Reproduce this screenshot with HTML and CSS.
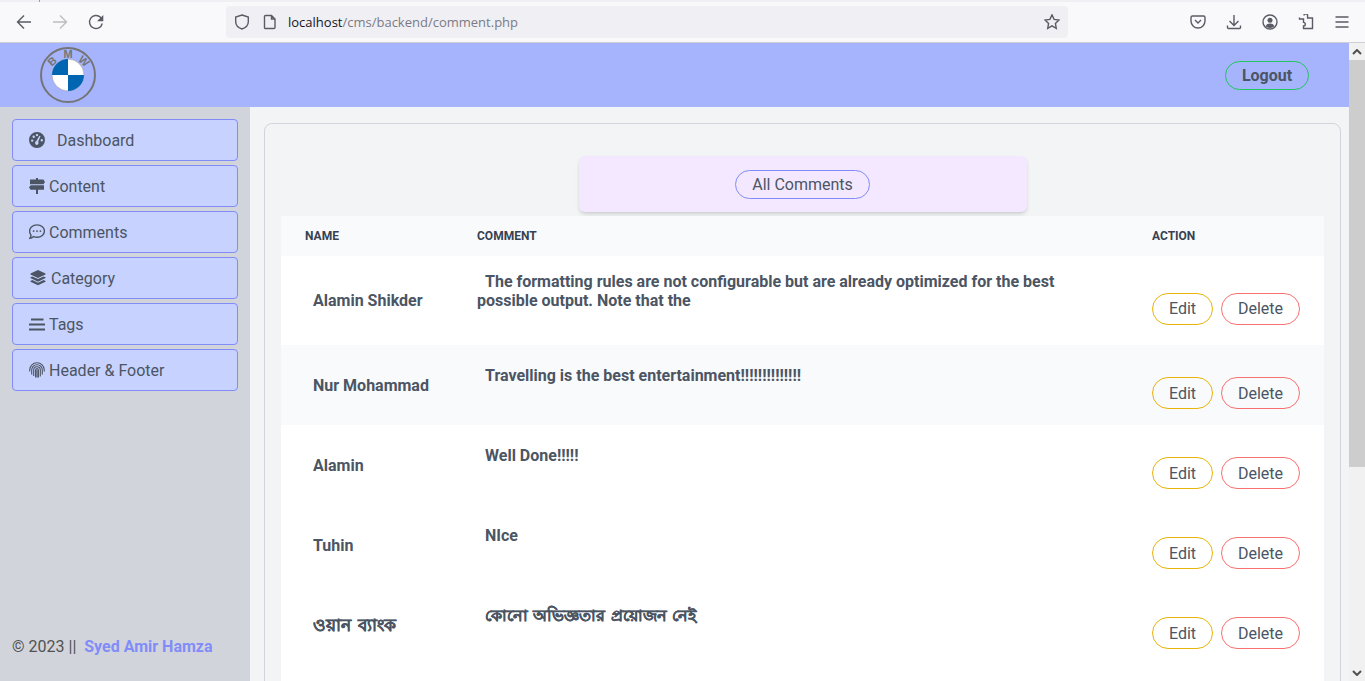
FILE: index.html
```html
<!DOCTYPE html>
<html lang="en">
<head>
<meta charset="utf-8">
<title>Comments</title>
<link rel="stylesheet" href="styles.css">
</head>
<body>
<div class="browser">
  <div class="tabstrip"><span class="tab-tick"></span></div>
  <div class="toolbar">
    <div class="nav-icons">
      <svg class="tb" viewBox="0 0 16 16"><path d="M15 8H1.500M8 1.500L1.500 8 8 14.500"/></svg>
      <svg class="tb faded" viewBox="0 0 16 16"><path d="M1 8h13.500M8 1.500L14.500 8 8 14.500"/></svg>
      <svg class="tb" viewBox="0 0 16 16"><path d="M14.300 9.500A6.500 6.500 0 1 1 12.500 3.300L14 5"/><path class="fill" d="M15.300 1v6.300H9z"/></svg>
    </div>
    <div class="urlbar">
      <svg class="ub shield" viewBox="0 0 16 16"><path d="M8 1l6.300 2v4.800c0 3.400-2.700 6-6.300 7.200-3.600-1.200-6.300-3.800-6.300-7.200V3z"/></svg>
      <svg class="ub doc" viewBox="0 0 16 16"><path d="M3.500 1.500h6l3.500 3.500v8.500a1 1 0 0 1-1 1H3.500a1 1 0 0 1-1-1v-11a1 1 0 0 1 1-1zM9.500 1.500V5H13"/></svg>
      <span class="url"><span class="host">localhost</span>/cms/backend/comment.php</span>
      <svg class="ub star" viewBox="0 0 16 16"><path d="M8 .9l2.100 4.500 4.900.6-3.600 3.400.9 4.900L8 11.900l-4.300 2.400.9-4.900L1 6l4.900-.6z"/></svg>
    </div>
    <div class="tool-icons">
      <svg class="tb" viewBox="0 0 16 16"><path d="M2.500 2h11A1.500 1.500 0 0 1 15 3.500V7a7 7 0 0 1-14 0V3.500A1.500 1.500 0 0 1 2.500 2zM5 6l3 3 3-3"/></svg>
      <svg class="tb" viewBox="0 0 16 16"><path d="M8 1v10M3.500 7L8 11.500 12.500 7M1.500 11.500v2a1 1 0 0 0 1 1h11a1 1 0 0 0 1-1v-2"/></svg>
      <svg class="tb" viewBox="0 0 16 16"><circle cx="8" cy="8" r="7"/><circle class="fill" cx="8" cy="6.200" r="2.500"/><path class="fill" d="M3.500 12.200c1-2 2.500-2.700 4.500-2.700s3.500.7 4.500 2.700A6 6 0 0 1 8 14a6 6 0 0 1-4.500-1.800z"/></svg>
      <svg class="tb" viewBox="0 0 16 16"><path d="M6 1.500a1.800 1.800 0 0 1 3.600 0V4h4.900v10.500h-9V12a1.800 1.800 0 1 0 0-3.600V5H1.500V3.500"/></svg>
      <svg class="tb" viewBox="0 0 16 16"><path d="M1.500 3h13M1.500 8h13M1.500 13h13"/></svg>
    </div>
  </div>
</div>
<div class="viewport">
  <div class="page">
    <header class="topbar">
      <svg class="logo" viewBox="0 0 56 56">
        <circle class="logo-ring" cx="28" cy="28" r="27"/>
        <text class="logo-text" x="12" y="18" transform="rotate(-42 12 14)">B</text>
        <text class="logo-text" x="28" y="10.500">M</text>
        <text class="logo-text" x="44" y="18" transform="rotate(42 44 14)">W</text>
        <circle class="logo-white" cx="28" cy="28" r="16"/>
        <path class="logo-blue" d="M28 28V12A16 16 0 0 0 12 28zM28 28V44A16 16 0 0 0 44 28z"/>
      </svg>
      <a class="pill logout">Logout</a>
    </header>
    <div class="body-row">
      <aside class="sidebar">
        <nav class="menu">
          <a class="menu-item first">
            <svg class="mi" viewBox="0 0 16 16"><path fill-rule="evenodd" d="M8 0a8 8 0 1 0 0 16A8 8 0 0 0 8 0zM3.200 9.800a1.200 1.200 0 1 1 0-2.400 1.200 1.200 0 0 1 0 2.400zM4.700 5.900a1.200 1.200 0 1 1 0-2.400 1.200 1.200 0 0 1 0 2.400zM8 4.300a1.200 1.200 0 1 1 0-2.400 1.200 1.200 0 0 1 0 2.400zM8 13a2 2 0 0 1-.6-3.900l3-5.300 1.100.5-2.400 5.500A2 2 0 0 1 8 13zM12.800 9.400a1.200 1.200 0 1 1 0-2.400 1.200 1.200 0 0 1 0 2.400z"/></svg>
            <span>Dashboard</span>
          </a>
          <a class="menu-item">
            <svg class="mi" viewBox="0 0 16 16"><path d="M7 0h2v1.600h5.400L16 4l-1.600 2.300H1V1.600h6zM1.600 7.300H15v4.400H9V16H7v-4.300H1.600L0 9.500z"/></svg>
            <span>Content</span>
          </a>
          <a class="menu-item">
            <svg class="mi" viewBox="1 1 14 14"><path class="line" d="M8 1.800c3.800 0 6.500 2.400 6.500 5.400S11.800 12.600 8 12.600c-1.100 0-2.100-.2-3-.6-.8.8-2 1.500-3.500 1.600.8-.8 1.200-1.700 1.300-2.700C2.100 9.900 1.500 8.600 1.500 7.200 1.500 4.200 4.200 1.800 8 1.800z"/><circle cx="5" cy="7.200" r=".8"/><circle cx="8" cy="7.200" r=".8"/><circle cx="11" cy="7.200" r=".8"/></svg>
            <span>Comments</span>
          </a>
          <a class="menu-item">
            <svg class="mi wide" viewBox="-1 0 18 16"><path d="M8 0l7.500 3.600v.8L8 8 .5 4.400v-.8zM2.300 6.400L8 9.100l5.700-2.700 1.800.9v.8L8 11.700.5 8.100v-.8zM2.300 10L8 12.700l5.700-2.700 1.800.9v.8L8 15.300.5 11.700v-.8z"/></svg>
            <span>Category</span>
          </a>
          <a class="menu-item">
            <svg class="mi" viewBox="0 0 16 16"><path d="M2 2.500h12.500v2H2zM0 7.500h16v2H0zM0 12.500h16v2H0z"/></svg>
            <span>Tags</span>
          </a>
          <a class="menu-item">
            <svg class="mi" viewBox="0 0 16 16"><path class="line thin" d="M.7 9.500V8a7.300 7.300 0 0 1 14.600 0v1.500M2.700 12.500V8a5.300 5.300 0 0 1 10.600 0v4.500M4.700 14V8a3.300 3.300 0 0 1 6.600 0v6.500M6.600 15.500V8a1.400 1.400 0 0 1 2.800 0v7.500M8 8v7.500"/></svg>
            <span>Header &amp; Footer</span>
          </a>
        </nav>
        <footer class="copyright">© 2023 || <b class="author">Syed Amir Hamza</b></footer>
      </aside>
      <main class="content">
        <section class="card">
          <div class="title-box"><span class="pill title-pill">All Comments</span></div>
          <div class="table-wrap">
            <table class="comments">
              <colgroup><col class="c-name"><col class="c-comment"><col class="c-action"></colgroup>
              <thead>
                <tr><th>Name</th><th>Comment</th><th>Action</th></tr>
              </thead>
              <tbody>
                <tr>
                  <td class="name">Alamin Shikder</td>
                  <td class="comment"><p>The formatting rules are not configurable but are already optimized for the best possible output. Note that the<br><br></p></td>
                  <td class="action"><a class="btn edit">Edit</a><a class="btn delete">Delete</a></td>
                </tr>
                <tr class="alt">
                  <td class="name">Nur Mohammad</td>
                  <td class="comment"><p>Travelling is the best entertainment!!!!!!!!!!!!!!<br><br></p></td>
                  <td class="action"><a class="btn edit">Edit</a><a class="btn delete">Delete</a></td>
                </tr>
                <tr>
                  <td class="name">Alamin</td>
                  <td class="comment"><p>Well Done!!!!!<br><br></p></td>
                  <td class="action"><a class="btn edit">Edit</a><a class="btn delete">Delete</a></td>
                </tr>
                <tr>
                  <td class="name">Tuhin</td>
                  <td class="comment"><p>NIce<br><br></p></td>
                  <td class="action"><a class="btn edit">Edit</a><a class="btn delete">Delete</a></td>
                </tr>
                <tr>
                  <td class="name bn-name" lang="bn">ওয়ান ব্যাংক</td>
                  <td class="comment bn-comment" lang="bn"><p>কোনো অভিজ্ঞতার প্রয়োজন নেই<br><br></p></td>
                  <td class="action"><a class="btn edit">Edit</a><a class="btn delete">Delete</a></td>
                </tr>
              </tbody>
            </table>
          </div>
        </section>
      </main>
    </div>
  </div>
  <div class="scrollbar">
    <div class="sb-btn"><svg viewBox="0 0 10 6"><path d="M1 5l4-4 4 4"/></svg></div>
    <div class="sb-track"><div class="sb-thumb"></div></div>
    <div class="sb-btn"><svg viewBox="0 0 10 6"><path d="M1 1l4 4 4-4"/></svg></div>
  </div>
</div>
</body>
</html>
```
FILE: styles.css
```css
* { box-sizing: border-box; }
html, body { margin: 0; height: 100%; overflow: hidden; }
body {
  display: flex;
  flex-direction: column;
  font-family: Roboto, "Noto Sans", "Liberation Sans", sans-serif;
  font-size: 16px;
  color: #4b5563;
  background: #f3f4f6;
}

/* browser chrome */
.browser { flex: none; height: 43px; background: #f9f9fb; border-bottom: 1px solid #cfcfd4; }
.tabstrip { height: 2px; background: #f0f0f4; display: flex; padding-left: 39px; }
.tab-tick { width: 1px; background: #9a9aa2; }
.toolbar { display: flex; align-items: center; height: 40px; }
.nav-icons { display: flex; gap: 20px; width: 226px; padding-left: 16px; }
.tb { width: 16px; height: 16px; fill: none; stroke: #5b5b66; stroke-width: 1.4; flex: none; }
.tb.faded { stroke: #bcbcc2; }
.tb .fill { fill: #5b5b66; stroke: none; }
.urlbar {
  display: flex; align-items: center;
  width: 842px; height: 32px;
  background: #f0f0f4; border-radius: 4px;
  padding: 0 8px;
}
.ub { width: 16px; height: 16px; fill: none; stroke: #5b5b66; stroke-width: 1.4; flex: none; }
.shield { margin-right: 12px; }
.doc { margin-right: 10px; }
.url { flex: 1; font-family: "Open Sans", "Liberation Sans", sans-serif; font-size: 13px; color: #7a7a85; }
.host { color: #15141a; }
.tool-icons { display: flex; gap: 20px; margin-left: 122px; }

/* page */
.viewport { flex: 1; min-height: 0; display: flex; }
.page { flex: 1; min-width: 0; display: flex; flex-direction: column; min-height: 0; overflow: hidden; }
.topbar {
  flex: none; height: 64px; background: #a5b4fc;
  display: flex; align-items: center; justify-content: space-between;
  padding: 0 40px;
}
.logo { width: 56px; height: 56px; }
.logo-ring { fill: none; stroke: #757575; stroke-width: 2; }
.logo-text { font: 700 11px "Liberation Sans", sans-serif; fill: #757575; text-anchor: middle; }
.logo-white { fill: #fff; stroke: #8a8a8a; stroke-width: .5; }
.logo-blue { fill: #0066b1; }
.pill {
  display: inline-flex; align-items: center; justify-content: center;
  border-radius: 999px; border: 1px solid #818cf8;
}
.logout { width: 84px; height: 29px; border-color: #22c55e; font-weight: 700; }

.body-row { flex: 1; min-height: 0; display: flex; }
.sidebar {
  flex: none; width: 250px; background: #d1d5db;
  padding: 12px; display: flex; flex-direction: column; justify-content: space-between;
}
.menu { display: flex; flex-direction: column; gap: 4px; }
.menu-item {
  display: flex; align-items: center; gap: 4px;
  height: 42px; padding: 0 16px;
  background: #c7d2fe; border: 1px solid #818cf8; border-radius: 4px;
}
.menu-item.first { gap: 12px; }
.mi { width: 16px; height: 16px; fill: #4b5563; flex: none; }
.mi.wide { width: 18px; }
.mi .line { fill: none; stroke: #4b5563; stroke-width: 1.2; }
.mi .thin { stroke-width: 1.1; }
.copyright { padding-bottom: 13px; color: #525252; white-space: pre-wrap; }
.author { color: #818cf8; font-weight: 700; margin-left: 4px; }

.content { flex: 1; min-width: 0; padding: 16px 8px 0 14px; overflow: hidden; }
.card {
  border: 1px solid #d1d5db; border-radius: 8px;
  padding: 32px 16px 32px;
  background: #f3f4f6;
}
.title-box {
  width: 448px; height: 56px; margin: 0 auto 4px;
  background: #f3e8ff; border-radius: 6px;
  box-shadow: 0 3px 5px -1px rgba(0,0,0,.14), 0 1px 3px -1px rgba(0,0,0,.1);
  display: flex; align-items: center; justify-content: center;
}
.title-pill { width: 135px; height: 29px; }
.table-wrap { background: #fff; padding-bottom: 32px; }
.comments { width: 100%; border-collapse: collapse; table-layout: fixed; }
.c-name { width: 172px; }
.c-comment { width: 675px; }
.c-action { width: 196px; }
thead { background: #f9fafb; }
th {
  height: 40px; padding: 0 24px; text-align: left;
  font-size: 12px; font-weight: 700; color: #374151; text-transform: uppercase;
}
td { padding: 16px 24px; vertical-align: middle; font-weight: 700; line-height: 19px; }
.name { padding-left: 32px; white-space: nowrap; }
.comment p { margin: 0; max-width: 600px; text-indent: 8px; }
.bn-name { font-size: 17px; word-spacing: 3px; -webkit-text-stroke: .3px #4b5563; }
.bn-comment { font-size: 16.300px; word-spacing: 1.300px; -webkit-text-stroke: .3px #4b5563; }
.alt { background: #f9fafb; }
.action { white-space: nowrap; padding-right: 0; }
.btn {
  display: inline-flex; align-items: center; justify-content: center;
  height: 32px; margin-top: 16px; border-radius: 999px; font-weight: 400;
  border: 1px solid; vertical-align: top;
}
.edit { width: 61px; border-color: #eab308; margin-right: 8px; }
.delete { width: 79px; border-color: #f87171; }

/* scrollbar */
.scrollbar { flex: none; width: 16px; display: flex; flex-direction: column; background: #f1f1f1; }
.sb-btn { height: 17px; display: flex; align-items: center; justify-content: center; }
.sb-btn svg { width: 10px; height: 6px; fill: none; stroke: #505050; stroke-width: 2; }
.sb-track { flex: 1; }
.sb-thumb { height: 407px; background: #cdcdcd; }
```
